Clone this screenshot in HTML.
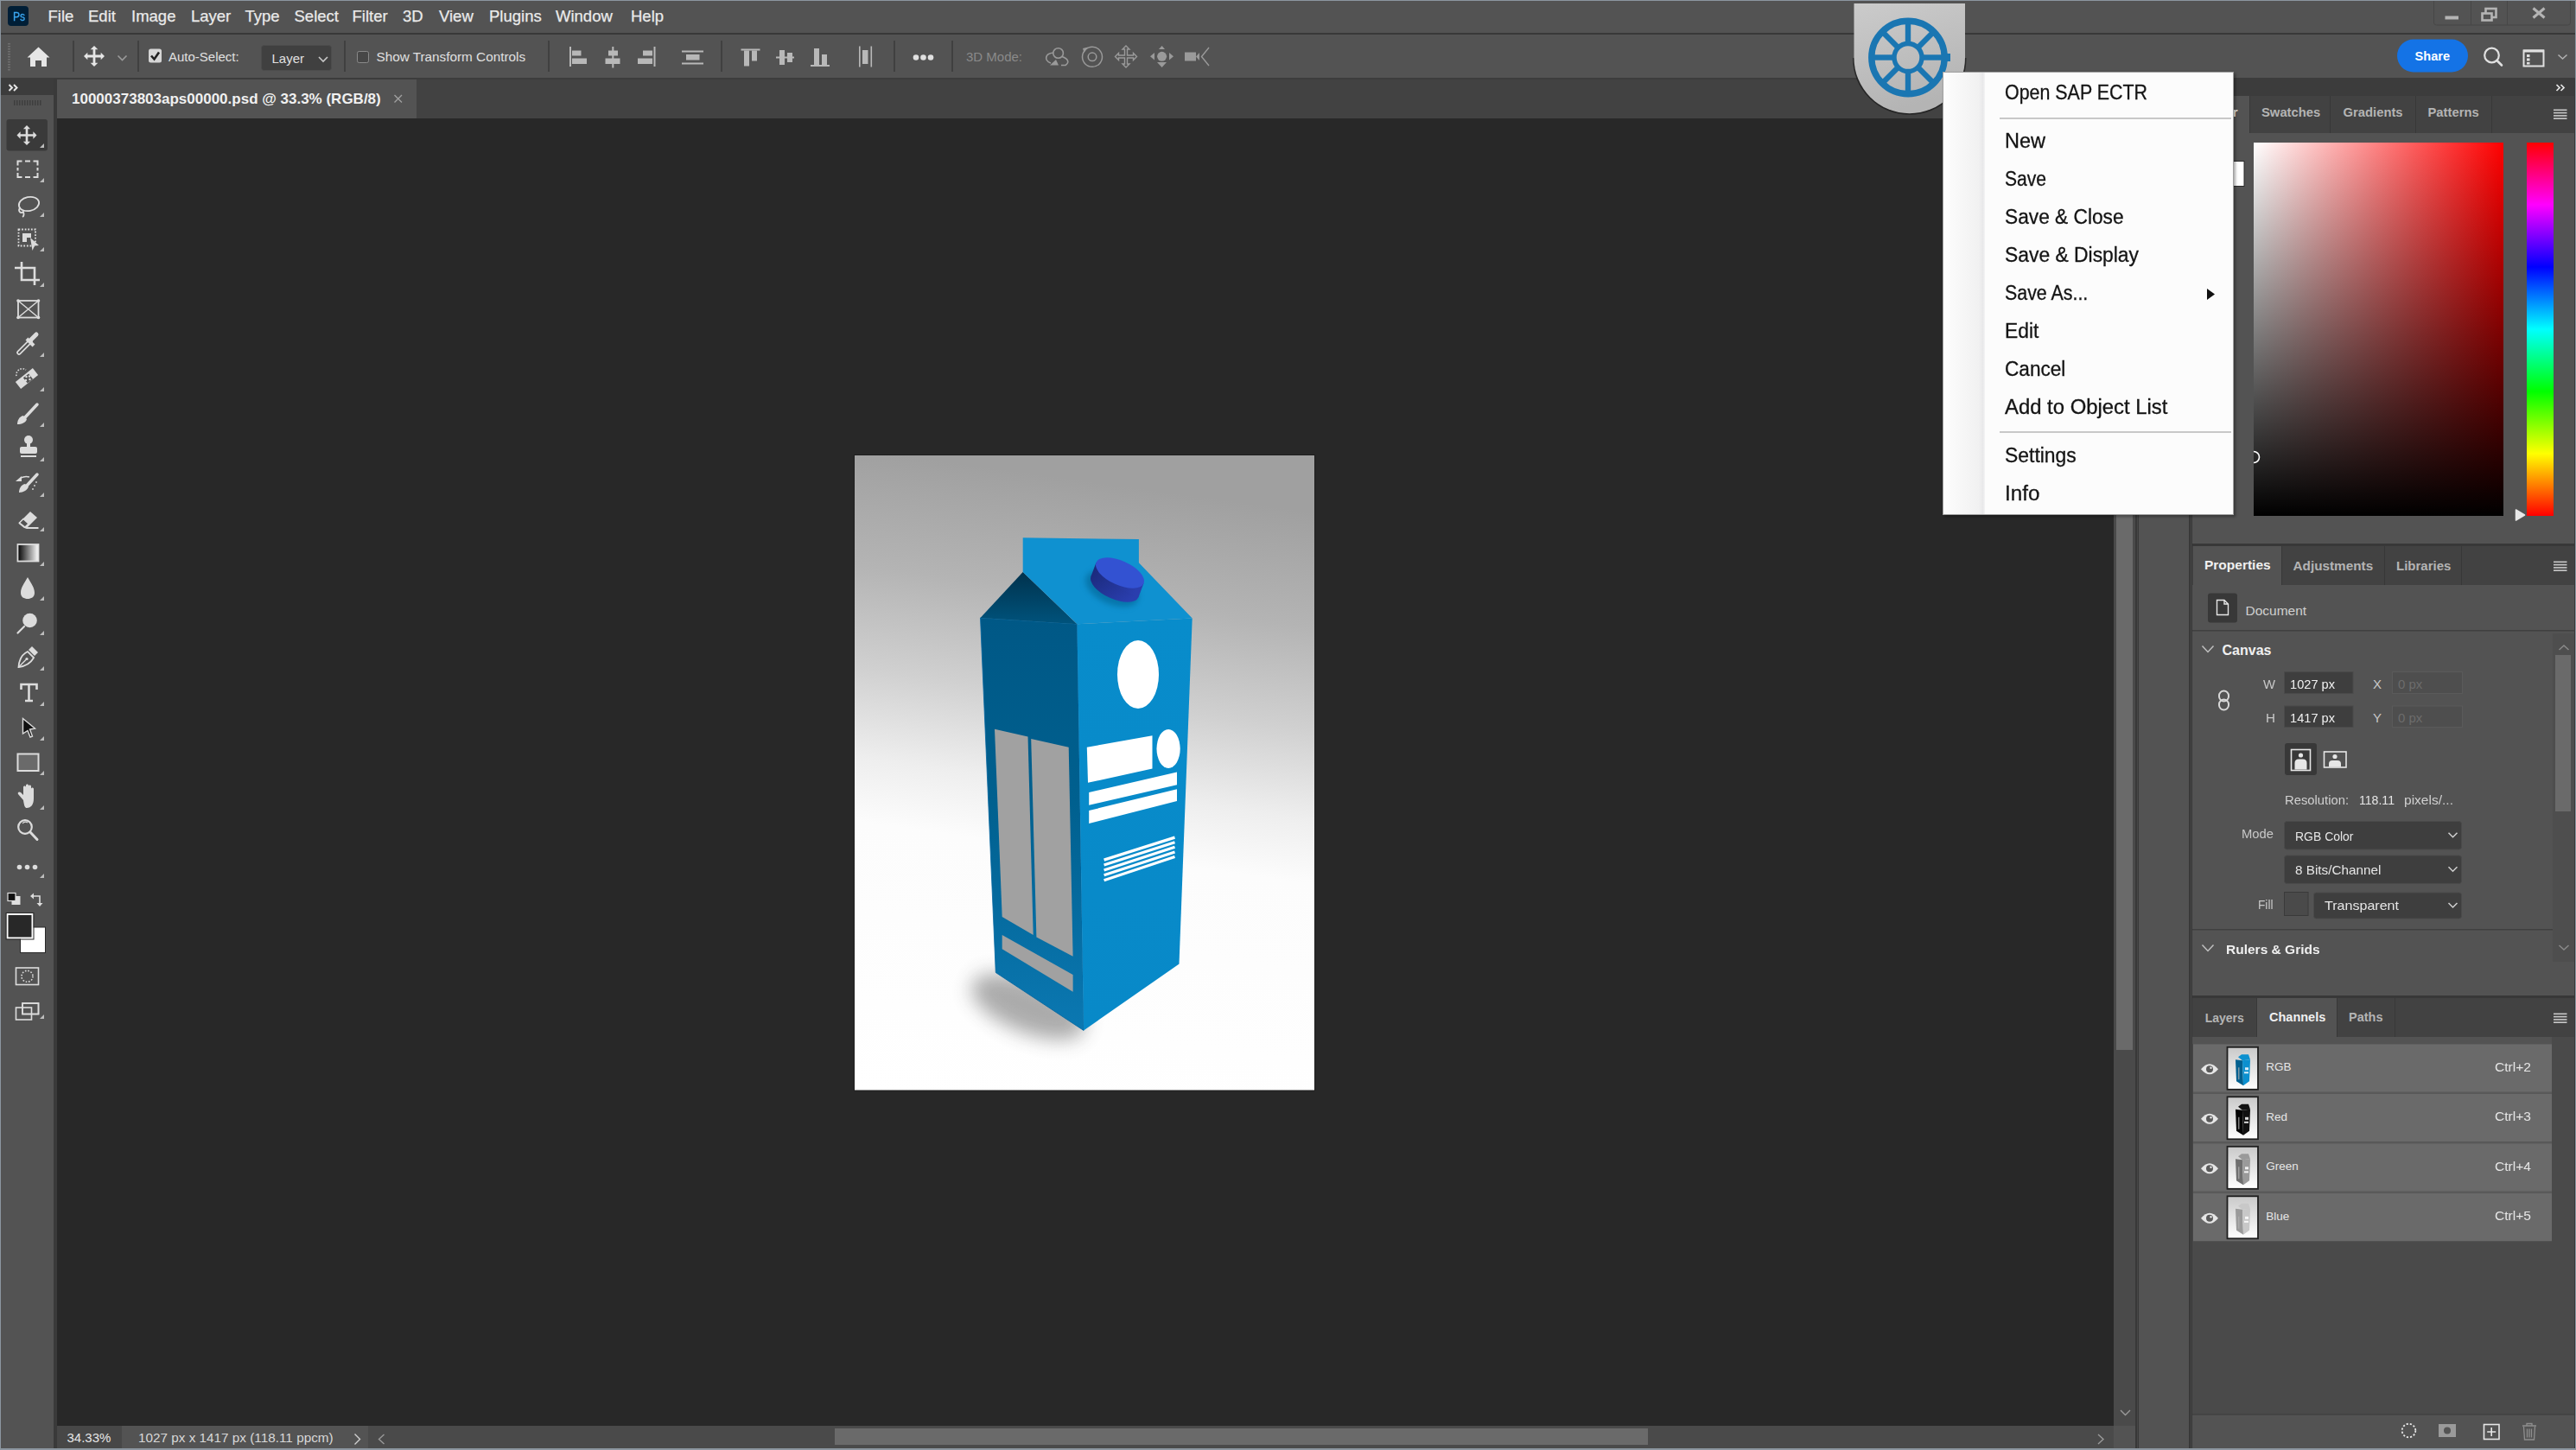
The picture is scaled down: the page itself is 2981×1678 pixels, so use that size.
<!DOCTYPE html>
<html><head><meta charset="utf-8">
<style>
*{margin:0;padding:0;box-sizing:border-box}
html,body{width:2981px;height:1678px;overflow:hidden;background:#535353}
body{position:relative;font-family:"Liberation Sans",sans-serif;color:#e0e0e0}
.a{position:absolute;display:block}
.t{position:absolute;white-space:nowrap;line-height:1}
</style></head><body>
<div class="a" style="left:0px;top:0px;width:2981px;height:1px;background:#8c96a0;"></div>
<div class="a" style="left:0px;top:0px;width:1.2px;height:1678px;background:#8c96a0;"></div>
<div class="a" style="left:0px;top:1676px;width:2981px;height:2px;background:#8c96a0;"></div>
<div class="a" style="left:1.2px;top:1px;width:2979.8px;height:37px;background:#535353;"></div>
<div class="a" style="left:1.2px;top:38px;width:2979.8px;height:2px;background:#383838;"></div>
<div class="a" style="left:1.2px;top:40px;width:2979.8px;height:51px;background:#535353;"></div>
<div class="a" style="left:66px;top:91px;width:2380px;height:46px;background:#424242;"></div>
<div class="a" style="left:66px;top:91px;width:416px;height:46px;background:#535353;"></div>
<div class="a" style="left:1.2px;top:90px;width:2979.8px;height:1.5px;background:#3c3c3c;"></div>
<div class="a" style="left:1.2px;top:91px;width:60.8px;height:1585px;background:#535353;"></div>
<div class="a" style="left:1.2px;top:91px;width:60.8px;height:19px;background:#3c3c3c;"></div>
<div class="a" style="left:62px;top:91px;width:4px;height:1585px;background:#3a3a3a;"></div>
<div class="a" style="left:66px;top:137px;width:2380px;height:1513px;background:#282828;"></div>
<div class="a" style="left:2446px;top:136px;width:25px;height:1514px;background:#4a4a4a;"></div>
<div class="a" style="left:2449px;top:137px;width:19px;height:1078px;background:#6a6a6a;"></div>
<div class="a" style="left:66px;top:1650px;width:2405px;height:26px;background:#4a4a4a;"></div>
<div class="a" style="left:66px;top:1650px;width:75px;height:26px;background:#474747;"></div>
<div class="a" style="left:141px;top:1650px;width:285px;height:26px;background:#535353;"></div>
<div class="a" style="left:966px;top:1653px;width:941px;height:19px;background:#6a6a6a;"></div>
<div class="a" style="left:2446px;top:1650px;width:25px;height:26px;background:#535353;"></div>
<div class="a" style="left:2471px;top:91px;width:4px;height:1585px;background:#474747;"></div>
<div class="a" style="left:2471px;top:91px;width:1.5px;height:1585px;background:#383838;"></div>
<div class="a" style="left:2473.8px;top:91px;width:1.5px;height:1585px;background:#383838;"></div>
<div class="a" style="left:2475px;top:91px;width:58px;height:1585px;background:#535353;"></div>
<div class="a" style="left:2533px;top:91px;width:4.5px;height:1585px;background:#474747;"></div>
<div class="a" style="left:2533px;top:91px;width:1.5px;height:1585px;background:#383838;"></div>
<div class="a" style="left:2536px;top:91px;width:1.5px;height:1585px;background:#383838;"></div>
<div class="a" style="left:2979px;top:91px;width:1.2px;height:1585px;background:#383838;"></div>
<div class="a" style="left:2537px;top:91px;width:442px;height:20px;background:#3c3c3c;"></div>
<div class="a" style="left:2537px;top:111px;width:442px;height:43px;background:#424242;"></div>
<div class="a" style="left:2537px;top:111px;width:66px;height:43px;background:#535353;"></div>
<div class="a" style="left:2537px;top:154px;width:442px;height:475px;background:#535353;"></div>
<div class="a" style="left:2537px;top:629px;width:442px;height:3px;background:#383838;"></div>
<div class="a" style="left:2537px;top:632px;width:442px;height:45px;background:#424242;"></div>
<div class="a" style="left:2538px;top:632px;width:102px;height:45px;background:#535353;"></div>
<div class="a" style="left:2537px;top:677px;width:442px;height:475px;background:#535353;"></div>
<div class="a" style="left:2537px;top:1152px;width:442px;height:3px;background:#383838;"></div>
<div class="a" style="left:2537px;top:1155px;width:442px;height:45px;background:#424242;"></div>
<div class="a" style="left:2612px;top:1155px;width:92px;height:45px;background:#535353;"></div>
<div class="a" style="left:2537px;top:1200px;width:442px;height:437px;background:#4a4a4a;"></div>
<div class="a" style="left:2537px;top:1637px;width:442px;height:39px;background:#535353;"></div>
<div class="a" style="left:2980.2px;top:0px;width:0.8px;height:1678px;background:#8c96a0;"></div>
<div class="a" style="left:9px;top:7px;width:24px;height:23px;background:#001e36;border-radius:4px"></div>
<div class="t" style="left:14.9px;top:11.93px;font-size:14.5px;color:#3aa6f0;font-weight:400;transform:scaleX(0.8391);transform-origin:0 0;-webkit-text-stroke:0.3px #3aa6f0;">Ps</div>
<div class="t" style="left:55.5px;top:10.24px;font-size:18.5px;color:#eaeaea;font-weight:400;-webkit-text-stroke:0.25px #eaeaea;">File</div>
<div class="t" style="left:102px;top:10.24px;font-size:18.5px;color:#eaeaea;font-weight:400;-webkit-text-stroke:0.25px #eaeaea;">Edit</div>
<div class="t" style="left:152px;top:10.24px;font-size:18.5px;color:#eaeaea;font-weight:400;-webkit-text-stroke:0.25px #eaeaea;">Image</div>
<div class="t" style="left:221px;top:10.24px;font-size:18.5px;color:#eaeaea;font-weight:400;-webkit-text-stroke:0.25px #eaeaea;">Layer</div>
<div class="t" style="left:283.5px;top:10.24px;font-size:18.5px;color:#eaeaea;font-weight:400;-webkit-text-stroke:0.25px #eaeaea;">Type</div>
<div class="t" style="left:340.5px;top:10.24px;font-size:18.5px;color:#eaeaea;font-weight:400;-webkit-text-stroke:0.25px #eaeaea;">Select</div>
<div class="t" style="left:407.5px;top:10.24px;font-size:18.5px;color:#eaeaea;font-weight:400;-webkit-text-stroke:0.25px #eaeaea;">Filter</div>
<div class="t" style="left:466px;top:10.24px;font-size:18.5px;color:#eaeaea;font-weight:400;-webkit-text-stroke:0.25px #eaeaea;">3D</div>
<div class="t" style="left:508px;top:10.24px;font-size:18.5px;color:#eaeaea;font-weight:400;-webkit-text-stroke:0.25px #eaeaea;">View</div>
<div class="t" style="left:566px;top:10.24px;font-size:18.5px;color:#eaeaea;font-weight:400;-webkit-text-stroke:0.25px #eaeaea;">Plugins</div>
<div class="t" style="left:643px;top:10.24px;font-size:18.5px;color:#eaeaea;font-weight:400;-webkit-text-stroke:0.25px #eaeaea;">Window</div>
<div class="t" style="left:730px;top:10.24px;font-size:18.5px;color:#eaeaea;font-weight:400;-webkit-text-stroke:0.25px #eaeaea;">Help</div>
<div class="t" style="left:195px;top:58.30px;font-size:15px;color:#e0e0e0;font-weight:400;">Auto-Select:</div>
<div class="t" style="left:435.5px;top:58.05px;font-size:15.3px;color:#e0e0e0;font-weight:400;">Show Transform Controls</div>
<div class="t" style="left:1118px;top:58.30px;font-size:15px;color:#8a8a8a;font-weight:400;">3D Mode:</div>
<div class="t" style="left:83px;top:106.11px;font-size:17px;color:#f0f0f0;font-weight:700;">10000373803aps00000.psd @ 33.3% (RGB/8)</div>
<div class="t" style="left:77.5px;top:1656.30px;font-size:15px;color:#e6e6e6;font-weight:400;">34.33%</div>
<div class="t" style="left:160px;top:1656.05px;font-size:15.3px;color:#d8d8d8;font-weight:400;">1027 px x 1417 px (118.11 ppcm)</div>
<div class="t" style="left:2617px;top:122.97px;font-size:14.8px;color:#b4b4b4;font-weight:700;">Swatches</div>
<div class="t" style="left:2711.5px;top:122.97px;font-size:14.8px;color:#b4b4b4;font-weight:700;">Gradients</div>
<div class="t" style="left:2809.5px;top:122.97px;font-size:14.8px;color:#b4b4b4;font-weight:700;">Patterns</div>
<div class="t" style="left:2551px;top:646.48px;font-size:15.5px;color:#f0f0f0;font-weight:700;">Properties</div>
<div class="t" style="left:2653.5px;top:646.65px;font-size:15.3px;color:#b4b4b4;font-weight:700;">Adjustments</div>
<div class="t" style="left:2773px;top:646.90px;font-size:15px;color:#b4b4b4;font-weight:700;">Libraries</div>
<div class="t" style="left:2598.5px;top:699.18px;font-size:15.5px;color:#d0d0d0;font-weight:400;">Document</div>
<div class="t" style="left:2571.5px;top:745.06px;font-size:16px;color:#f0f0f0;font-weight:700;">Canvas</div>
<div class="t" style="left:2551.7px;top:1170.55px;font-size:14px;color:#b4b4b4;font-weight:700;">Layers</div>
<div class="t" style="left:2626px;top:1170.13px;font-size:14.5px;color:#f0f0f0;font-weight:700;">Channels</div>
<div class="t" style="left:2718px;top:1170.13px;font-size:14.5px;color:#b4b4b4;font-weight:700;">Paths</div>
<svg class="a" style="left:0;top:0" width="2981" height="1678" viewBox="0 0 2981 1678"><rect x="9" y="50" width="3" height="1.5" fill="#6e6e6e"/><rect x="9" y="53" width="3" height="1.5" fill="#6e6e6e"/><rect x="9" y="56" width="3" height="1.5" fill="#6e6e6e"/><rect x="9" y="59" width="3" height="1.5" fill="#6e6e6e"/><rect x="9" y="62" width="3" height="1.5" fill="#6e6e6e"/><rect x="9" y="65" width="3" height="1.5" fill="#6e6e6e"/><rect x="9" y="68" width="3" height="1.5" fill="#6e6e6e"/><rect x="9" y="71" width="3" height="1.5" fill="#6e6e6e"/><rect x="9" y="74" width="3" height="1.5" fill="#6e6e6e"/><rect x="9" y="77" width="3" height="1.5" fill="#6e6e6e"/><rect x="9" y="80" width="3" height="1.5" fill="#6e6e6e"/><path d="M44.5 54.5 L57.5 66.5 L54 66.5 L54 77 L48 77 L48 70 L41 70 L41 77 L35 77 L35 66.5 L31.5 66.5 Z" fill="#e6e6e6"/><rect x="84" y="47" width="2" height="36" fill="#404040"/><rect x="159" y="47" width="2" height="36" fill="#404040"/><rect x="398" y="47" width="2" height="36" fill="#404040"/><rect x="634" y="47" width="2" height="36" fill="#404040"/><rect x="834" y="47" width="2" height="36" fill="#404040"/><rect x="1034" y="47" width="2" height="36" fill="#404040"/><rect x="1101" y="47" width="2" height="36" fill="#404040"/><path d="M107.62 57.32 L104.68 57.32 L109 53 L113.32 57.32 L110.38 57.32 L110.38 63.62 L116.68 63.62 L116.68 60.68 L121 65 L116.68 69.32 L116.68 66.38 L110.38 66.38 L110.38 72.68 L113.32 72.68 L109 77 L104.68 72.68 L107.62 72.68 L107.62 66.38 L101.32 66.38 L101.32 69.32 L97 65 L101.32 60.68 L101.32 63.62 L107.62 63.62 Z" fill="#e6e6e6"/><path d="M136.5 64.5 L141.5 69.5 L146.5 64.5" stroke="#9a9a9a" stroke-width="1.6" fill="none"/><rect x="172" y="56.5" width="15" height="16" rx="2.5" fill="#d6d6d6"/><path d="M175 64.5 L178.5 68.5 L184 60.5" stroke="#202020" stroke-width="2.6" fill="none"/><rect x="302.5" y="52.5" width="81" height="29" rx="3" fill="#404040" stroke="#4c4c4c" stroke-width="1"/><path d="M369 66 L374 71 L379 66" stroke="#c8c8c8" stroke-width="1.6" fill="none"/><rect x="413.5" y="59.5" width="13" height="13" rx="2" fill="#474747" stroke="#8a8a8a" stroke-width="1"/><rect x="659" y="54" width="2" height="23" fill="#b8b8b8"/><rect x="662" y="58.5" width="10.5" height="6" fill="#b8b8b8"/><rect x="662" y="67.5" width="17" height="6.5" fill="#b8b8b8"/><rect x="708.3" y="54" width="2" height="24.5" fill="#b8b8b8"/><rect x="704" y="58.5" width="11" height="6" fill="#b8b8b8"/><rect x="700.5" y="67.5" width="17" height="6.5" fill="#b8b8b8"/><rect x="756.5" y="54" width="2" height="23" fill="#b8b8b8"/><rect x="744" y="58.5" width="11" height="6" fill="#b8b8b8"/><rect x="738" y="67.5" width="17" height="6.5" fill="#b8b8b8"/><rect x="789" y="58.5" width="25" height="2" fill="#b8b8b8"/><rect x="794" y="63" width="15.5" height="6.5" fill="#b8b8b8"/><rect x="789" y="72.5" width="25" height="2" fill="#b8b8b8"/><rect x="857.5" y="56.5" width="22" height="2" fill="#b8b8b8"/><rect x="861" y="58.5" width="6" height="18" fill="#b8b8b8"/><rect x="870" y="58.5" width="6" height="12" fill="#b8b8b8"/><rect x="898" y="65.5" width="21" height="2" fill="#b8b8b8"/><rect x="902" y="58" width="6" height="17" fill="#b8b8b8"/><rect x="911" y="61" width="6" height="11" fill="#b8b8b8"/><rect x="938" y="75" width="22" height="2" fill="#b8b8b8"/><rect x="942" y="56" width="6" height="19" fill="#b8b8b8"/><rect x="951" y="63" width="6" height="12" fill="#b8b8b8"/><rect x="994" y="53.5" width="1.6" height="24" fill="#b8b8b8"/><rect x="1007.5" y="53.5" width="1.6" height="24" fill="#b8b8b8"/><rect x="998" y="58" width="6.5" height="16" fill="#b8b8b8"/><circle cx="1060" cy="66.5" r="3.3" fill="#e0e0e0"/><circle cx="1068.5" cy="66.5" r="3.3" fill="#e0e0e0"/><circle cx="1077" cy="66.5" r="3.3" fill="#e0e0e0"/><circle cx="1224.6" cy="61.5" r="5.8" stroke="#9a9a9a" stroke-width="1.6" fill="none"/><path d="M1219 61 C1209 62 1208 70 1216 73" stroke="#9a9a9a" stroke-width="1.6" fill="none"/><path d="M1229 65.5 C1236 68 1238 72 1233 75.5 L1228 75.5" stroke="#9a9a9a" stroke-width="1.6" fill="none"/><path d="M1215 75.5 L1222 69 L1225 75.5 Z" fill="#9a9a9a"/><circle cx="1264" cy="65.8" r="11.5" stroke="#9a9a9a" stroke-width="1.5" fill="none"/><circle cx="1264" cy="65.8" r="4.8" stroke="#9a9a9a" stroke-width="1.5" fill="none"/><path d="M1253 56 L1259 54.5 L1254.5 61 Z" fill="#9a9a9a"/><path d="M1303 53 L1307 57 L1304.5 57 L1304.5 64 L1311.5 64 L1311.5 61.5 L1315.5 65.5 L1311.5 69.5 L1311.5 67 L1304.5 67 L1304.5 74 L1307 74 L1303 78 L1299 74 L1301.5 74 L1301.5 67 L1294.5 67 L1294.5 69.5 L1290.5 65.5 L1294.5 61.5 L1294.5 64 L1301.5 64 L1301.5 57 L1299 57 Z" stroke="#9a9a9a" stroke-width="1.4" fill="none"/><circle cx="1344.6" cy="65.3" r="5.5" fill="#9a9a9a"/><path d="M1344.6 53 L1348 57 L1341 57 Z M1331 65.3 L1336 61 L1336 69.5 Z M1358 65.3 L1353 61 L1353 69.5 Z M1344.6 78 L1339 72 L1350 72 Z" fill="#9a9a9a"/><rect x="1371" y="60.5" width="13" height="10" fill="#9a9a9a"/><path d="M1384 65.5 L1388 61 L1388 70 Z" fill="#9a9a9a"/><path d="M1399 55 L1390.5 65.5 L1399 76" stroke="#9a9a9a" stroke-width="1.4" fill="none"/><path d="M2816.5 1 L2816.5 26 Q2816.5 29 2819.5 29 L2971.5 29 Q2974.5 29 2974.5 26 L2974.5 1"  fill="#535353" stroke="#474747" stroke-width="1"/><rect x="2859" y="1" width="1" height="28" fill="#474747"/><rect x="2901" y="1" width="1" height="28" fill="#474747"/><rect x="2829.5" y="18.5" width="15.5" height="4" fill="#b4b4b4"/><rect x="2876.5" y="10" width="12" height="10" stroke="#b4b4b4" stroke-width="2.6" fill="none"/><rect x="2872.5" y="15.5" width="11" height="8" stroke="#b4b4b4" stroke-width="2.6" fill="#535353"/><path d="M2931.5 9.5 L2944.5 20.5 M2944.5 9.5 L2931.5 20.5" stroke="#b4b4b4" stroke-width="3"/><rect x="2774" y="45.5" width="82" height="38" rx="19" fill="#1473e6"/><circle cx="2883.5" cy="64" r="8.3" stroke="#e0e0e0" stroke-width="2.2" fill="none"/><path d="M2889.5 70 L2895 75.5" stroke="#e0e0e0" stroke-width="2.6" stroke-linecap="round"/><rect x="2920.5" y="58.5" width="23" height="18" stroke="#e0e0e0" stroke-width="2" fill="none"/><rect x="2920" y="57.5" width="24" height="3" fill="#e0e0e0"/><rect x="2924" y="63" width="3.5" height="3" fill="#e0e0e0"/><rect x="2924" y="67.5" width="3.5" height="3" fill="#e0e0e0"/><rect x="2924" y="72" width="3.5" height="2.5" fill="#e0e0e0"/><path d="M2960.5 63.5 L2965.5 68 L2970.5 63.5" stroke="#b0b0b0" stroke-width="1.6" fill="none"/></svg>
<div class="t" style="left:2794.5px;top:58.44px;font-size:14.6px;color:#ffffff;font-weight:700;">Share</div>
<div class="t" style="left:314.5px;top:59.50px;font-size:15px;color:#e0e0e0;font-weight:400;">Layer</div>
<svg class="a" style="left:0;top:0" width="2981" height="1678" viewBox="0 0 2981 1678"><defs>
<linearGradient id="bgG" x1="0.1" y1="0" x2="0" y2="1"><stop offset="0" stop-color="#a0a0a0"/><stop offset="0.18" stop-color="#b4b4b4"/><stop offset="0.34" stop-color="#d0d0d0"/><stop offset="0.48" stop-color="#eeeeee"/><stop offset="0.58" stop-color="#fcfcfc"/><stop offset="1" stop-color="#ffffff"/></linearGradient>
<linearGradient id="leftG" x1="0" y1="0" x2="0" y2="1"><stop offset="0" stop-color="#005886"/><stop offset="0.45" stop-color="#00608f"/><stop offset="1" stop-color="#0b78b2"/></linearGradient>
<linearGradient id="gabG" x1="0" y1="0" x2="0" y2="1"><stop offset="0" stop-color="#00324d"/><stop offset="1" stop-color="#00537c"/></linearGradient>
<linearGradient id="frontG" x1="0" y1="0" x2="0" y2="1"><stop offset="0" stop-color="#088ccb"/><stop offset="1" stop-color="#0889c8"/></linearGradient>
<linearGradient id="capSide" x1="0" y1="0" x2="1" y2="0.3"><stop offset="0" stop-color="#1a2878"/><stop offset="1" stop-color="#2a3eae"/></linearGradient><filter id="capB" x="-50%" y="-50%" width="200%" height="200%"><feGaussianBlur stdDeviation="3"/></filter><filter id="shB" x="-50%" y="-50%" width="200%" height="200%"><feGaussianBlur stdDeviation="11"/></filter>
</defs><rect x="988" y="526" width="534" height="736.5" fill="#1e1e1e"/><rect x="989" y="527" width="532" height="734.5" fill="url(#bgG)"/><ellipse cx="1190" cy="1165" rx="70" ry="30" fill="#3a3a3a" opacity="0.42" filter="url(#shB)" transform="rotate(22 1190 1165)"/><path d="M1134.5 715 L1246.5 722.2 L1254 1192.5 L1152.3 1125.5 Z" fill="url(#leftG)" stroke="#0065a0" stroke-width="0.8"/><path d="M1246.5 722.2 L1379.7 715.5 L1364.5 1115.5 L1254 1192.5 Z" fill="url(#frontG)"/><path d="M1183.7 662 L1134.5 715 L1246.5 722.2 Z" fill="url(#gabG)"/><path d="M1183.7 622.2 L1317.9 624.1 L1317.9 651.2 L1379.7 715.5 L1246.5 722.2 L1183.7 662 Z" fill="#0f91d0"/><ellipse cx="1287" cy="681" rx="33" ry="18" fill="#005f8c" opacity="0.55" filter="url(#capB)" transform="rotate(24 1287 681)"/><ellipse cx="1290" cy="679" rx="30" ry="14" fill="url(#capSide)" transform="rotate(24 1290 679)"/><path d="M1268.4 651.2 L1323.6 674.8 L1317.6 690.8 L1262.4 667.2 Z" fill="url(#capSide)"/><ellipse cx="1296" cy="663" rx="30" ry="14" fill="#3352d2" transform="rotate(24 1296 663)"/><path d="M1151 843.7 L1189.5 852.4 L1195.7 1082 L1159.7 1061 Z" fill="#a1a1a1"/><path d="M1193.2 854.9 L1236.7 864.8 L1241.6 1106.8 L1199.4 1084.5 Z" fill="#a1a1a1"/><path d="M1159.7 1082 L1241.6 1128 L1241.6 1147.8 L1159.7 1098.2 Z" fill="#a1a1a1"/><ellipse cx="1317" cy="780.5" rx="24" ry="39.6" fill="#ffffff"/><ellipse cx="1352.1" cy="866.5" rx="13.6" ry="22.5" fill="#ffffff"/><path d="M1257.8 864.8 L1333.5 851.2 L1333.5 889.6 L1259 905.8 Z" fill="#ffffff"/><path d="M1260.2 917 L1362 893.4 L1362 908.3 L1260.2 931.8 Z" fill="#ffffff"/><path d="M1260.2 938 L1362 913.2 L1362 926.9 L1260.2 953 Z" fill="#ffffff"/><path d="M1277.6 995.1 L1359.5 969.1" stroke="#ffffff" stroke-width="3.2"/><path d="M1277.6 1001.0 L1359.5 974.7" stroke="#ffffff" stroke-width="3.2"/><path d="M1277.6 1006.9 L1359.5 980.3" stroke="#ffffff" stroke-width="3.2"/><path d="M1277.6 1012.8 L1359.5 985.9" stroke="#ffffff" stroke-width="3.2"/><path d="M1277.6 1018.7 L1359.5 991.5" stroke="#ffffff" stroke-width="3.2"/></svg>
<svg class="a" style="left:0;top:0" width="2981" height="1678" viewBox="0 0 2981 1678"><path d="M10.5 98 L14 101.5 L10.5 105 M16 98 L19.5 101.5 L16 105" stroke="#e6e6e6" stroke-width="2" fill="none"/><rect x="16" y="116" width="1.5" height="6" fill="#3e3e3e"/><rect x="19" y="116" width="1.5" height="6" fill="#3e3e3e"/><rect x="22" y="116" width="1.5" height="6" fill="#3e3e3e"/><rect x="25" y="116" width="1.5" height="6" fill="#3e3e3e"/><rect x="28" y="116" width="1.5" height="6" fill="#3e3e3e"/><rect x="31" y="116" width="1.5" height="6" fill="#3e3e3e"/><rect x="34" y="116" width="1.5" height="6" fill="#3e3e3e"/><rect x="37" y="116" width="1.5" height="6" fill="#3e3e3e"/><rect x="40" y="116" width="1.5" height="6" fill="#3e3e3e"/><rect x="43" y="116" width="1.5" height="6" fill="#3e3e3e"/><rect x="46" y="116" width="1.5" height="6" fill="#3e3e3e"/><rect x="7.5" y="138" width="47.5" height="36.5" rx="3" fill="#3a3a3a"/><path d="M29.6775 149.14 L26.86 149.14 L31 145.0 L35.14 149.14 L32.3225 149.14 L32.3225 155.1775 L38.36 155.1775 L38.36 152.36 L42.5 156.5 L38.36 160.64 L38.36 157.8225 L32.3225 157.8225 L32.3225 163.86 L35.14 163.86 L31 168.0 L26.86 163.86 L29.6775 163.86 L29.6775 157.8225 L23.64 157.8225 L23.64 160.64 L19.5 156.5 L23.64 152.36 L23.64 155.1775 L29.6775 155.1775 Z" fill="#dcdcdc"/><path d="M51 166 L51 171 L46 171 Z" fill="#bdbdbd"/><path d="M20.5 191.5 L20.5 186.5 L25.5 186.5 M29 186.5 L35 186.5 M38.5 186.5 L43.5 186.5 L43.5 191.5 M43.5 194 L43.5 197.5 M43.5 200 L43.5 205 L38.5 205 M35 205 L29 205 M25.5 205 L20.5 205 L20.5 200 M20.5 197.5 L20.5 194" stroke="#dcdcdc" stroke-width="2" fill="none"/><path d="M51 206 L51 211 L46 211 Z" fill="#bdbdbd"/><ellipse cx="33.5" cy="236" rx="11.8" ry="8" stroke="#dcdcdc" stroke-width="1.8" fill="none" transform="rotate(-12 33.5 236)"/><path d="M23.5 240 C20 244 24 248 27 245 C28 248 28 250 26 251" stroke="#dcdcdc" stroke-width="1.8" fill="none"/><path d="M51 246 L51 251 L46 251 Z" fill="#bdbdbd"/><rect x="21.5" y="265.5" width="19.5" height="19" stroke="#dcdcdc" stroke-width="1.8" fill="none" stroke-dasharray="1.8 1.8"/><path d="M26 270 L36 270 L36 275 L31 275 L31 280 L26 280 Z" fill="#dcdcdc"/><path d="M35 275 L45 284 L40 284.5 L37.5 290 Z" fill="#dcdcdc"/><path d="M51 286 L51 291 L46 291 Z" fill="#bdbdbd"/><path d="M17 310 L40 310 L40 330 M25 303 L25 324 L46 324" stroke="#dcdcdc" stroke-width="2.6" fill="none"/><path d="M51 327 L51 332 L46 332 Z" fill="#bdbdbd"/><rect x="21" y="348" width="23.5" height="19.5" stroke="#dcdcdc" stroke-width="1.8" fill="none"/><path d="M21 348 L44.5 367.5 M44.5 348 L21 367.5" stroke="#dcdcdc" stroke-width="1.5"/><circle cx="21" cy="348" r="1.8" fill="#dcdcdc"/><circle cx="44.5" cy="348" r="1.8" fill="#dcdcdc"/><circle cx="21" cy="367.5" r="1.8" fill="#dcdcdc"/><circle cx="44.5" cy="367.5" r="1.8" fill="#dcdcdc"/><path d="M22 408 L35 395" stroke="#dcdcdc" stroke-width="5.5" stroke-linecap="round"/><path d="M22 408 L35 395" stroke="#535353" stroke-width="2.2" stroke-linecap="round"/><path d="M31 392 L39 400" stroke="#dcdcdc" stroke-width="4"/><path d="M36 393 L42 387" stroke="#dcdcdc" stroke-width="5" stroke-linecap="round"/><path d="M51 408 L51 413 L46 413 Z" fill="#bdbdbd"/><path d="M21 446 L41 430" stroke="#dcdcdc" stroke-width="10"/><rect x="28.5" y="434" width="8" height="8" transform="rotate(-38 32.5 438)" fill="#535353"/><circle cx="30.5" cy="436" r="1.2" fill="#dcdcdc"/><circle cx="34.5" cy="439" r="1.2" fill="#dcdcdc"/><circle cx="30" cy="440" r="1.2" fill="#dcdcdc"/><circle cx="34" cy="435.5" r="1.2" fill="#dcdcdc"/><path d="M19 435 A7 7 0 0 1 30 428" stroke="#dcdcdc" stroke-width="1.6" fill="none" stroke-dasharray="1.6 1.6"/><path d="M51 448 L51 453 L46 453 Z" fill="#bdbdbd"/><path d="M43 468 L29 483" stroke="#dcdcdc" stroke-width="3.5" stroke-linecap="round"/><path d="M27 481 C22 482 20 487 20 491 C25 491 30 489 31 485 Z" fill="#dcdcdc"/><path d="M51 489 L51 494 L46 494 Z" fill="#bdbdbd"/><circle cx="33" cy="509" r="5" fill="#dcdcdc"/><rect x="31" y="512" width="4" height="6" fill="#dcdcdc"/><rect x="23" y="517" width="20" height="8" rx="2" fill="#dcdcdc"/><rect x="24" y="527" width="18" height="2" fill="#dcdcdc"/><path d="M51 529 L51 534 L46 534 Z" fill="#bdbdbd"/><path d="M43 549 L31 562" stroke="#dcdcdc" stroke-width="3.5" stroke-linecap="round"/><path d="M29 560 C24 561 22 566 22 570 C27 570 32 567 33 563 Z" fill="#dcdcdc"/><path d="M18 557 L25 551 L25 557 Z" fill="#dcdcdc"/><path d="M24 553 C28 551 31 551 34 552" stroke="#dcdcdc" stroke-width="1.5" fill="none"/><circle cx="38" cy="566" r="0.9" fill="#dcdcdc"/><circle cx="40" cy="562" r="0.9" fill="#dcdcdc"/><circle cx="42" cy="558" r="0.9" fill="#dcdcdc"/><path d="M51 570 L51 575 L46 575 Z" fill="#bdbdbd"/><path d="M22 605 L35 592 L43 599 L31 611 Z" fill="#dcdcdc"/><path d="M22 605 L28 610 L31 611 L44.5 611" stroke="#dcdcdc" stroke-width="1.8" fill="none"/><path d="M22.5 605 L27 600.5 L33 606 L29 610 Z" fill="#535353" stroke="#dcdcdc" stroke-width="1.5"/><path d="M51 610 L51 615 L46 615 Z" fill="#bdbdbd"/><defs><linearGradient id="tg" x1="0" x2="1"><stop offset="0" stop-color="#000"/><stop offset="1" stop-color="#fff"/></linearGradient></defs><rect x="20.5" y="630" width="24" height="19.5" fill="url(#tg)" stroke="#dcdcdc" stroke-width="1.8"/><path d="M51 650 L51 655 L46 655 Z" fill="#bdbdbd"/><path d="M32 668 C28 675 24 680 24 686 C24 691 28 693 32 693 C36 693 40 691 40 686 C40 680 36 675 32 668 Z" fill="#dcdcdc"/><path d="M51 690 L51 695 L46 695 Z" fill="#bdbdbd"/><circle cx="34.5" cy="718" r="8.3" fill="#dcdcdc"/><path d="M28 725 L20.5 732.5" stroke="#dcdcdc" stroke-width="2.2" stroke-linecap="round"/><path d="M51 730 L51 735 L46 735 Z" fill="#bdbdbd"/><path d="M21.5 772 C22 764 26 757 32 754 L39 761 C36 767 29 771 21.5 772 Z" stroke="#dcdcdc" stroke-width="1.8" fill="none"/><path d="M33 752 L37 748 L44 755 L40 759 Z" fill="#dcdcdc"/><path d="M22 771.5 L30 763.5" stroke="#dcdcdc" stroke-width="1.4"/><circle cx="31" cy="762.5" r="1.6" fill="#dcdcdc"/><path d="M51 771 L51 776 L46 776 Z" fill="#bdbdbd"/><path d="M24.5 798 L24.5 792 L42.5 792 L42.5 798 M33.5 792.5 L33.5 811 M29 811 L38 811" stroke="#dcdcdc" stroke-width="2.6" fill="none"/><path d="M51 812 L51 817 L46 817 Z" fill="#bdbdbd"/><path d="M26.5 831.5 L40.5 843 L34.5 844 L37.5 852 L35 853 L32 845.5 L26.5 849 Z" fill="#111" stroke="#dcdcdc" stroke-width="1.4"/><path d="M51 852 L51 857 L46 857 Z" fill="#bdbdbd"/><rect x="20.5" y="872.5" width="24" height="19.5" fill="#6a6a6a" stroke="#dcdcdc" stroke-width="2"/><path d="M51 892 L51 897 L46 897 Z" fill="#bdbdbd"/><path d="M27 926 L21 919 C20 917 22 915.5 24 917 L27 920 L27 911 C27 909 30 909 30 911 L30 918 L30 909 C30 907 33 907 33 909 L33 918 L33 910 C33 908 36 908 36 910 L36 919 L36 913 C36 911 39 911 39 913 L39 924 C39 931 36 935 31 935 C29 935 28 933 27 926 Z" fill="#dcdcdc"/><path d="M51 932 L51 937 L46 937 Z" fill="#bdbdbd"/><circle cx="29" cy="957" r="7.8" stroke="#dcdcdc" stroke-width="2.2" fill="none"/><path d="M35 963 L43 971.5" stroke="#dcdcdc" stroke-width="3" stroke-linecap="round"/><path d="M26 953 A4.5 4.5 0 0 1 32 952" stroke="#dcdcdc" stroke-width="1.2" fill="none"/><circle cx="22.5" cy="1003.5" r="2.8" fill="#dcdcdc"/><circle cx="31.5" cy="1003.5" r="2.8" fill="#dcdcdc"/><circle cx="40.5" cy="1003.5" r="2.8" fill="#dcdcdc"/><path d="M51 1011 L51 1016 L46 1016 Z" fill="#bdbdbd"/><rect x="13.5" y="1037" width="10" height="10" fill="#e0e0e0"/><rect x="9" y="1033.5" width="9" height="9" fill="#111" stroke="#e0e0e0" stroke-width="1.2"/><path d="M37 1037 L46 1037 L46 1046" stroke="#dcdcdc" stroke-width="1.6" fill="none"/><path d="M35 1037 L39 1033.5 L39 1040.5 Z M46 1049 L42.5 1045 L49.5 1045 Z" fill="#dcdcdc"/><rect x="23.5" y="1073" width="29" height="29.5" fill="#ffffff" stroke="#2a2a2a" stroke-width="1"/><rect x="8.5" y="1058" width="29" height="27.5" fill="#282828" stroke="#ffffff" stroke-width="2"/><rect x="7" y="1056.5" width="32" height="30.5" fill="none" stroke="#2a2a2a" stroke-width="1"/><rect x="18.5" y="1120" width="26" height="19.5" stroke="#dcdcdc" stroke-width="1.6" fill="none"/><circle cx="31.5" cy="1129.8" r="6.5" stroke="#dcdcdc" stroke-width="1.6" fill="none" stroke-dasharray="1.6 1.8"/><rect x="26" y="1161" width="18.5" height="12.5" stroke="#dcdcdc" stroke-width="1.6" fill="#535353"/><rect x="18.5" y="1166" width="18" height="14" stroke="#dcdcdc" stroke-width="1.6" fill="none"/><rect x="26" y="1161" width="18.5" height="12.5" stroke="#dcdcdc" stroke-width="1.6" fill="none"/><path d="M51 1174 L51 1179 L46 1179 Z" fill="#bdbdbd"/><path d="M456.5 110 L465 118.5 M465 110 L456.5 118.5" stroke="#a0a0a0" stroke-width="1.4"/></svg>
<svg class="a" style="left:0;top:0" width="2981" height="1678" viewBox="0 0 2981 1678"><defs>
<linearGradient id="satG" x1="0" x2="1"><stop offset="0" stop-color="#fff"/><stop offset="1" stop-color="#ff0000"/></linearGradient>
<linearGradient id="valG" x1="0" y1="0" x2="0" y2="1"><stop offset="0" stop-color="#000" stop-opacity="0"/><stop offset="1" stop-color="#000" stop-opacity="1"/></linearGradient>
<linearGradient id="hueG" x1="0" y1="0" x2="0" y2="1"><stop offset="0" stop-color="#ff0000"/><stop offset="0.1667" stop-color="#ff00ff"/><stop offset="0.3333" stop-color="#0000ff"/><stop offset="0.5" stop-color="#00ffff"/><stop offset="0.6667" stop-color="#00ff00"/><stop offset="0.8333" stop-color="#ffff00"/><stop offset="1" stop-color="#ff0000"/></linearGradient>
<linearGradient id="thG" x1="0" y1="0" x2="0" y2="1"><stop offset="0" stop-color="#c9c9c9"/><stop offset="1" stop-color="#ffffff"/></linearGradient>
</defs><path d="M2958.5 98 L2962 101.5 L2958.5 105 M2963.5 98 L2967 101.5 L2963.5 105" stroke="#e6e6e6" stroke-width="1.7" fill="none"/><rect x="2603" y="111" width="1" height="43" fill="#383838"/><rect x="2696" y="111" width="1" height="43" fill="#383838"/><rect x="2795" y="111" width="1" height="43" fill="#383838"/><rect x="2883" y="111" width="1" height="43" fill="#383838"/><rect x="2955" y="126.5" width="15.5" height="1.6" fill="#c8c8c8"/><rect x="2955" y="129.8" width="15.5" height="1.6" fill="#c8c8c8"/><rect x="2955" y="133.1" width="15.5" height="1.6" fill="#c8c8c8"/><rect x="2955" y="136.4" width="15.5" height="1.6" fill="#c8c8c8"/><rect x="2608" y="165" width="289" height="432" fill="url(#satG)"/><rect x="2608" y="165" width="289" height="432" fill="url(#valG)"/><rect x="2924" y="165" width="31" height="432" fill="url(#hueG)"/><path d="M2911.5 590 L2921.5 596 L2911.5 602 Z" fill="#e8e8e8" stroke="#e8e8e8" stroke-width="1.5" stroke-linejoin="round"/><path d="M2608 522.5 A6.5 6.5 0 0 1 2608 535.5" stroke="#ffffff" stroke-width="1.6" fill="none"/><rect x="2560" y="186.5" width="37" height="29" fill="#ffffff" stroke="#2a2a2a" stroke-width="1"/><rect x="2640" y="632" width="1" height="45" fill="#383838"/><rect x="2759" y="632" width="1" height="45" fill="#383838"/><rect x="2848" y="632" width="1" height="45" fill="#383838"/><rect x="2955" y="649.5" width="15.5" height="1.6" fill="#c8c8c8"/><rect x="2955" y="652.8" width="15.5" height="1.6" fill="#c8c8c8"/><rect x="2955" y="656.1" width="15.5" height="1.6" fill="#c8c8c8"/><rect x="2955" y="659.4" width="15.5" height="1.6" fill="#c8c8c8"/><rect x="2555" y="686.5" width="34" height="34" rx="3" fill="#383838"/><path d="M2565.5 694.5 L2574 694.5 L2578.5 699 L2578.5 711.5 L2565.5 711.5 Z M2574 694.5 L2574 699 L2578.5 699" stroke="#e6e6e6" stroke-width="1.4" fill="none"/><rect x="2537" y="729" width="442" height="1.5" fill="#404040"/><path d="M2548.5 747.5 L2555 754.5 L2561.5 747.5" stroke="#c0c0c0" stroke-width="1.5" fill="none"/><rect x="2954" y="733" width="25" height="380" fill="#4e4e4e"/><rect x="2957" y="758" width="18" height="181" fill="#6a6a6a"/><path d="M2961.5 752 L2967 747 L2972.5 752" stroke="#8a8a8a" stroke-width="1.5" fill="none"/><path d="M2961.5 1094 L2967 1099 L2972.5 1094" stroke="#8a8a8a" stroke-width="1.5" fill="none"/><rect x="2568" y="799.5" width="11" height="12" rx="5.5" stroke="#d8d8d8" stroke-width="2" fill="none"/><rect x="2568" y="809.5" width="11" height="12" rx="5.5" stroke="#d8d8d8" stroke-width="2" fill="none"/><rect x="2643.5" y="777.5" width="79.5" height="25" fill="#3e3e3e" stroke="#4a4a4a" stroke-width="1"/><rect x="2643.5" y="817" width="79.5" height="24.5" fill="#3e3e3e" stroke="#4a4a4a" stroke-width="1"/><rect x="2768.5" y="777.5" width="81" height="25" fill="#4e4e4e" stroke="#5a5a5a" stroke-width="1"/><rect x="2768.5" y="817" width="81" height="24.5" fill="#4e4e4e" stroke="#5a5a5a" stroke-width="1"/><rect x="2644" y="860" width="37" height="37" rx="3" fill="#383838"/><rect x="2651.5" y="867.5" width="22" height="24" stroke="#e6e6e6" stroke-width="1.6" fill="none"/><circle cx="2662.5" cy="874" r="2.6" fill="#e6e6e6"/><path d="M2655.5 890.5 L2655.5 883 Q2655.5 878.5 2660 878.5 L2665 878.5 Q2669.5 878.5 2669.5 883 L2669.5 890.5 Z" fill="#e6e6e6"/><rect x="2689.5" y="870" width="25.5" height="18" stroke="#e6e6e6" stroke-width="1.6" fill="none"/><circle cx="2702" cy="875.5" r="2.6" fill="#e6e6e6"/><path d="M2695 887.5 L2695 884 Q2695 880 2699 880 L2705 880 Q2709 880 2709 884 L2709 887.5 Z" fill="#e6e6e6"/><rect x="2643.5" y="950.5" width="205" height="32.5" rx="3" fill="#3e3e3e" stroke="#4a4a4a" stroke-width="1"/><path d="M2833.5 963.75 L2838.5 968.75 L2843.5 963.75" stroke="#d0d0d0" stroke-width="1.5" fill="none"/><rect x="2643.5" y="990.0" width="205" height="32.5" rx="3" fill="#3e3e3e" stroke="#4a4a4a" stroke-width="1"/><path d="M2833.5 1003.25 L2838.5 1008.25 L2843.5 1003.25" stroke="#d0d0d0" stroke-width="1.5" fill="none"/><rect x="2677.5" y="1033.0" width="171" height="30" rx="3" fill="#3e3e3e" stroke="#4a4a4a" stroke-width="1"/><path d="M2833.5 1045.0 L2838.5 1050.0 L2843.5 1045.0" stroke="#d0d0d0" stroke-width="1.5" fill="none"/><rect x="2643.5" y="1032.5" width="27.5" height="27" fill="#4a4a4a" stroke="#3a3a3a" stroke-width="1"/><rect x="2537" y="1075" width="417" height="1.5" fill="#404040"/><path d="M2548.5 1093.5 L2555 1100.5 L2561.5 1093.5" stroke="#c0c0c0" stroke-width="1.5" fill="none"/><rect x="2611" y="1155" width="1" height="45" fill="#383838"/><rect x="2704" y="1155" width="1" height="45" fill="#383838"/><rect x="2771" y="1155" width="1" height="45" fill="#383838"/><rect x="2955" y="1172.5" width="15.5" height="1.6" fill="#c8c8c8"/><rect x="2955" y="1175.8" width="15.5" height="1.6" fill="#c8c8c8"/><rect x="2955" y="1179.1" width="15.5" height="1.6" fill="#c8c8c8"/><rect x="2955" y="1182.4" width="15.5" height="1.6" fill="#c8c8c8"/><rect x="2537" y="1200" width="442" height="8" fill="#535353"/><rect x="2538" y="1208.3" width="415" height="55.5" fill="#6a6a6a"/><rect x="2538" y="1263.8" width="415" height="2" fill="#5a5a5a"/><path d="M2547 1237.3 Q2557 1225.3 2567 1237.3 Q2557 1249.3 2547 1237.3 Z" fill="#e6e6e6"/><circle cx="2557" cy="1237.3" r="4" fill="#5a5a5a"/><circle cx="2558.5" cy="1235.8" r="1.2" fill="#e6e6e6"/><rect x="2577.5" y="1211.8" width="35.5" height="49" fill="url(#thG)" stroke="#1e1e1e" stroke-width="1.8"/><path d="M2587 1226.3 L2595 1227.3 L2596 1256.3 L2588 1251.3 Z" fill="#005f8e"/><path d="M2595 1227.3 L2604 1226.3 L2603 1251.3 L2596 1256.3 Z" fill="#0c90cf"/><path d="M2590 1223.3 L2594 1220.3 L2602 1220.3 L2604 1226.3 L2595 1227.3 Z" fill="#0c90cf"/><rect x="2598" y="1235.3" width="4" height="3" fill="#ffffff" opacity="0.85"/><rect x="2597" y="1240.3" width="5" height="2" fill="#ffffff" opacity="0.85"/><rect x="2590" y="1235.3" width="1.5" height="14" fill="#b0b0b0" opacity="0.7"/><rect x="2538" y="1265.8" width="415" height="55.5" fill="#6a6a6a"/><rect x="2538" y="1321.3" width="415" height="2" fill="#5a5a5a"/><path d="M2547 1294.8 Q2557 1282.8 2567 1294.8 Q2557 1306.8 2547 1294.8 Z" fill="#e6e6e6"/><circle cx="2557" cy="1294.8" r="4" fill="#5a5a5a"/><circle cx="2558.5" cy="1293.3" r="1.2" fill="#e6e6e6"/><rect x="2577.5" y="1269.3" width="35.5" height="49" fill="url(#thG)" stroke="#1e1e1e" stroke-width="1.8"/><path d="M2587 1283.8 L2595 1284.8 L2596 1313.8 L2588 1308.8 Z" fill="#050505"/><path d="M2595 1284.8 L2604 1283.8 L2603 1308.8 L2596 1313.8 Z" fill="#111111"/><path d="M2590 1280.8 L2594 1277.8 L2602 1277.8 L2604 1283.8 L2595 1284.8 Z" fill="#111111"/><rect x="2598" y="1292.8" width="4" height="3" fill="#ffffff" opacity="0.85"/><rect x="2597" y="1297.8" width="5" height="2" fill="#ffffff" opacity="0.85"/><rect x="2590" y="1292.8" width="1.5" height="14" fill="#b0b0b0" opacity="0.7"/><rect x="2538" y="1323.3" width="415" height="55.5" fill="#6a6a6a"/><rect x="2538" y="1378.8" width="415" height="2" fill="#5a5a5a"/><path d="M2547 1352.3 Q2557 1340.3 2567 1352.3 Q2557 1364.3 2547 1352.3 Z" fill="#e6e6e6"/><circle cx="2557" cy="1352.3" r="4" fill="#5a5a5a"/><circle cx="2558.5" cy="1350.8" r="1.2" fill="#e6e6e6"/><rect x="2577.5" y="1326.8" width="35.5" height="49" fill="url(#thG)" stroke="#1e1e1e" stroke-width="1.8"/><path d="M2587 1341.3 L2595 1342.3 L2596 1371.3 L2588 1366.3 Z" fill="#6e6e6e"/><path d="M2595 1342.3 L2604 1341.3 L2603 1366.3 L2596 1371.3 Z" fill="#9a9a9a"/><path d="M2590 1338.3 L2594 1335.3 L2602 1335.3 L2604 1341.3 L2595 1342.3 Z" fill="#9a9a9a"/><rect x="2598" y="1350.3" width="4" height="3" fill="#ffffff" opacity="0.85"/><rect x="2597" y="1355.3" width="5" height="2" fill="#ffffff" opacity="0.85"/><rect x="2590" y="1350.3" width="1.5" height="14" fill="#b0b0b0" opacity="0.7"/><rect x="2538" y="1380.8" width="415" height="55.5" fill="#6a6a6a"/><path d="M2547 1409.8 Q2557 1397.8 2567 1409.8 Q2557 1421.8 2547 1409.8 Z" fill="#e6e6e6"/><circle cx="2557" cy="1409.8" r="4" fill="#5a5a5a"/><circle cx="2558.5" cy="1408.3" r="1.2" fill="#e6e6e6"/><rect x="2577.5" y="1384.3" width="35.5" height="49" fill="url(#thG)" stroke="#1e1e1e" stroke-width="1.8"/><path d="M2587 1398.8 L2595 1399.8 L2596 1428.8 L2588 1423.8 Z" fill="#9a9a9a"/><path d="M2595 1399.8 L2604 1398.8 L2603 1423.8 L2596 1428.8 Z" fill="#c8c8c8"/><path d="M2590 1395.8 L2594 1392.8 L2602 1392.8 L2604 1398.8 L2595 1399.8 Z" fill="#c8c8c8"/><rect x="2598" y="1407.8" width="4" height="3" fill="#ffffff" opacity="0.85"/><rect x="2597" y="1412.8" width="5" height="2" fill="#ffffff" opacity="0.85"/><rect x="2590" y="1407.8" width="1.5" height="14" fill="#b0b0b0" opacity="0.7"/><rect x="2953" y="1200" width="26" height="437" fill="#4a4a4a"/><rect x="2537" y="1636" width="442" height="1.5" fill="#404040"/><circle cx="2787.5" cy="1655.5" r="7.8" stroke="#e6e6e6" stroke-width="1.8" fill="none" stroke-dasharray="2.2 2"/><rect x="2822" y="1648" width="20" height="15" fill="#9a9a9a"/><circle cx="2832" cy="1655.5" r="4" fill="#535353"/><rect x="2874.5" y="1648.5" width="17.5" height="17" stroke="#e6e6e6" stroke-width="1.6" fill="none"/><path d="M2883.2 1652 L2883.2 1662 M2878.2 1657 L2888.2 1657" stroke="#e6e6e6" stroke-width="1.6"/><path d="M2919 1650 L2935 1650 M2924 1650 L2924 1647.5 L2930 1647.5 L2930 1650 M2920.5 1651 L2921.5 1666 L2932.5 1666 L2933.5 1651 M2924.5 1653.5 L2924.5 1663.5 M2927 1653.5 L2927 1663.5 M2929.5 1653.5 L2929.5 1663.5" stroke="#8e8e8e" stroke-width="1.3" fill="none"/><path d="M410.5 1659.5 L416.5 1665.5 L410.5 1671.5" stroke="#d0d0d0" stroke-width="1.4" fill="none"/><path d="M444.5 1660 L438.5 1665.5 L444.5 1671" stroke="#9a9a9a" stroke-width="1.4" fill="none"/><path d="M2428 1660 L2434 1665.5 L2428 1671" stroke="#9a9a9a" stroke-width="1.4" fill="none"/><path d="M2454 1632 L2459.5 1637.5 L2465 1632" stroke="#9a9a9a" stroke-width="1.4" fill="none"/></svg>
<div class="t" style="left:2551px;top:122.97px;font-size:14.8px;color:#f0f0f0;font-weight:700;">Color</div>
<div class="t" style="left:2618.8px;top:783.90px;font-size:15px;color:#c8c8c8;font-weight:400;transform:scaleX(0.9889);transform-origin:0 0;">W</div>
<div class="t" style="left:2621.7px;top:822.50px;font-size:15px;color:#c8c8c8;font-weight:400;transform:scaleX(1.0154);transform-origin:0 0;">H</div>
<div class="t" style="left:2746px;top:783.90px;font-size:15px;color:#c8c8c8;font-weight:400;">X</div>
<div class="t" style="left:2746px;top:822.50px;font-size:15px;color:#c8c8c8;font-weight:400;">Y</div>
<div class="t" style="left:2650px;top:783.90px;font-size:15px;color:#f0f0f0;font-weight:400;transform:scaleX(0.9741);transform-origin:0 0;">1027 px</div>
<div class="t" style="left:2650px;top:822.50px;font-size:15px;color:#f0f0f0;font-weight:400;transform:scaleX(0.9741);transform-origin:0 0;">1417 px</div>
<div class="t" style="left:2775px;top:783.90px;font-size:15px;color:#6c6c6c;font-weight:400;">0 px</div>
<div class="t" style="left:2775px;top:822.50px;font-size:15px;color:#6c6c6c;font-weight:400;">0 px</div>
<div class="t" style="left:2644px;top:918.00px;font-size:15px;color:#d0d0d0;font-weight:400;transform:scaleX(0.9861);transform-origin:0 0;">Resolution:</div>
<div class="t" style="left:2729.6px;top:918.00px;font-size:15px;color:#e6e6e6;font-weight:400;transform:scaleX(0.9392);transform-origin:0 0;">118.11</div>
<div class="t" style="left:2782px;top:918.00px;font-size:15px;color:#d0d0d0;font-weight:400;transform:scaleX(1.0360);transform-origin:0 0;">pixels/...</div>
<div class="t" style="left:2594px;top:956.70px;font-size:15px;color:#c8c8c8;font-weight:400;transform:scaleX(0.9861);transform-origin:0 0;">Mode</div>
<div class="t" style="left:2656px;top:959.80px;font-size:15px;color:#e6e6e6;font-weight:400;transform:scaleX(0.9308);transform-origin:0 0;">RGB Color</div>
<div class="t" style="left:2656px;top:998.70px;font-size:15px;color:#e6e6e6;font-weight:400;transform:scaleX(1.0199);transform-origin:0 0;">8 Bits/Channel</div>
<div class="t" style="left:2612.7px;top:1039.00px;font-size:15px;color:#c8c8c8;font-weight:400;transform:scaleX(0.9133);transform-origin:0 0;">Fill</div>
<div class="t" style="left:2690.3px;top:1040.00px;font-size:15px;color:#e6e6e6;font-weight:400;transform:scaleX(1.0707);transform-origin:0 0;">Transparent</div>
<div class="t" style="left:2575.5px;top:1090.88px;font-size:15.5px;color:#f0f0f0;font-weight:700;transform:scaleX(1.0006);transform-origin:0 0;">Rulers &amp; Grids</div>
<div class="t" style="left:2622.3px;top:1228.07px;font-size:13.5px;color:#e6e6e6;font-weight:400;">RGB</div>
<div class="t" style="left:2887px;top:1226.80px;font-size:15px;color:#e6e6e6;font-weight:400;transform:scaleX(1.0388);transform-origin:0 0;">Ctrl+2</div>
<div class="t" style="left:2622.3px;top:1285.57px;font-size:13.5px;color:#e6e6e6;font-weight:400;">Red</div>
<div class="t" style="left:2887px;top:1284.30px;font-size:15px;color:#e6e6e6;font-weight:400;transform:scaleX(1.0388);transform-origin:0 0;">Ctrl+3</div>
<div class="t" style="left:2622.3px;top:1343.07px;font-size:13.5px;color:#e6e6e6;font-weight:400;">Green</div>
<div class="t" style="left:2887px;top:1341.80px;font-size:15px;color:#e6e6e6;font-weight:400;transform:scaleX(1.0388);transform-origin:0 0;">Ctrl+4</div>
<div class="t" style="left:2622.3px;top:1400.57px;font-size:13.5px;color:#e6e6e6;font-weight:400;">Blue</div>
<div class="t" style="left:2887px;top:1399.30px;font-size:15px;color:#e6e6e6;font-weight:400;transform:scaleX(1.0388);transform-origin:0 0;">Ctrl+5</div>
<svg class="a" style="left:0;top:0" width="2981" height="1678" viewBox="0 0 2981 1678"><defs><linearGradient id="sapG" x1="0" y1="0" x2="0.3" y2="1"><stop offset="0" stop-color="#cbcbcb"/><stop offset="1" stop-color="#b4b4b4"/></linearGradient></defs><path d="M2145.5 67 A64.25 64.25 0 0 0 2274 67" stroke="#1a1a1a" stroke-width="3" fill="none" opacity="0.7"/><path d="M2145.5 4 L2274 4 L2274 67 A64.25 64.25 0 0 1 2145.5 67 Z" fill="url(#sapG)"/><circle cx="2208" cy="66.5" r="42.2" stroke="#1a76b2" stroke-width="7.4" fill="none"/><circle cx="2208" cy="66.5" r="16" stroke="#1a76b2" stroke-width="5.4" fill="none"/><path d="M2224.0 66.5 L2250.0 66.5" stroke="#1a76b2" stroke-width="6.4"/><path d="M2219.3 77.8 L2237.7 96.2" stroke="#1a76b2" stroke-width="6.4"/><path d="M2208.0 82.5 L2208.0 108.5" stroke="#1a76b2" stroke-width="6.4"/><path d="M2196.7 77.8 L2178.3 96.2" stroke="#1a76b2" stroke-width="6.4"/><path d="M2192.0 66.5 L2166.0 66.5" stroke="#1a76b2" stroke-width="6.4"/><path d="M2196.7 55.2 L2178.3 36.8" stroke="#1a76b2" stroke-width="6.4"/><path d="M2208.0 50.5 L2208.0 24.5" stroke="#1a76b2" stroke-width="6.4"/><path d="M2219.3 55.2 L2237.7 36.8" stroke="#1a76b2" stroke-width="6.4"/><rect x="2248" y="62" width="9" height="9" fill="#1a76b2"/></svg>
<div class="a" style="left:2248px;top:83px;width:337px;height:513px;background:#fcfcfc;border:1px solid #a0a0a0;box-shadow:2px 2px 3px rgba(0,0,0,0.35)"></div>
<div class="a" style="left:2249px;top:84px;width:48px;height:511px;background:linear-gradient(90deg,#fdfdfd 0%,#f1f1f1 85%,#e8e8ea 95%,#f4f4f4 100%);"></div>
<div class="t" style="left:2320px;top:96.23px;font-size:23px;color:#141414;font-weight:400;transform:scaleX(0.9308);transform-origin:0 0;-webkit-text-stroke:0.3px #141414;">Open SAP ECTR</div>
<div class="t" style="left:2320px;top:151.53px;font-size:23px;color:#141414;font-weight:400;transform:scaleX(1.0215);transform-origin:0 0;-webkit-text-stroke:0.3px #141414;">New</div>
<div class="t" style="left:2320px;top:195.53px;font-size:23px;color:#141414;font-weight:400;transform:scaleX(0.9156);transform-origin:0 0;-webkit-text-stroke:0.3px #141414;">Save</div>
<div class="t" style="left:2320px;top:239.53px;font-size:23px;color:#141414;font-weight:400;transform:scaleX(0.9874);transform-origin:0 0;-webkit-text-stroke:0.3px #141414;">Save &amp; Close</div>
<div class="t" style="left:2320px;top:283.53px;font-size:23px;color:#141414;font-weight:400;transform:scaleX(0.9938);transform-origin:0 0;-webkit-text-stroke:0.3px #141414;">Save &amp; Display</div>
<div class="t" style="left:2320px;top:327.83px;font-size:23px;color:#141414;font-weight:400;transform:scaleX(0.9299);transform-origin:0 0;-webkit-text-stroke:0.3px #141414;">Save As...</div>
<div class="t" style="left:2320px;top:371.53px;font-size:23px;color:#141414;font-weight:400;transform:scaleX(0.9916);transform-origin:0 0;-webkit-text-stroke:0.3px #141414;">Edit</div>
<div class="t" style="left:2320px;top:415.53px;font-size:23px;color:#141414;font-weight:400;transform:scaleX(0.9833);transform-origin:0 0;-webkit-text-stroke:0.3px #141414;">Cancel</div>
<div class="t" style="left:2320px;top:459.53px;font-size:23px;color:#141414;font-weight:400;transform:scaleX(1.0378);transform-origin:0 0;-webkit-text-stroke:0.3px #141414;">Add to Object List</div>
<div class="t" style="left:2320px;top:515.53px;font-size:23px;color:#141414;font-weight:400;transform:scaleX(0.9963);transform-origin:0 0;-webkit-text-stroke:0.3px #141414;">Settings</div>
<div class="t" style="left:2320px;top:559.53px;font-size:23px;color:#141414;font-weight:400;transform:scaleX(1.0531);transform-origin:0 0;-webkit-text-stroke:0.3px #141414;">Info</div>
<div class="a" style="left:2314px;top:136px;width:268px;height:2px;background:#c8c8c8;"></div>
<div class="a" style="left:2314px;top:499px;width:268px;height:2px;background:#c8c8c8;"></div>
<svg class="a" style="left:2553px;top:333px;" width="11" height="15" viewBox="0 0 11 15"><path d="M1 1 L10 7.5 L1 14 Z" fill="#101010"/></svg>
</body></html>
